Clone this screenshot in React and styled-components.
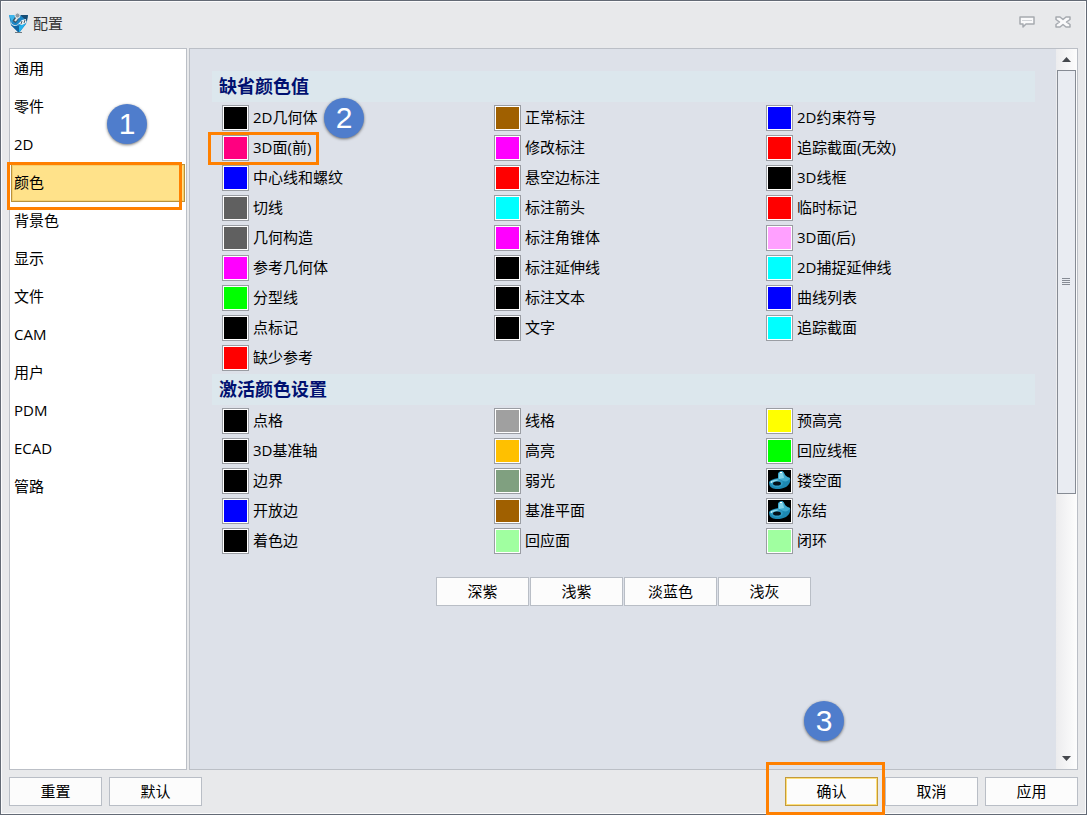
import React from "react";
import styled, { createGlobalStyle, css } from "styled-components";

const GlobalStyle = createGlobalStyle`
  *, *::before, *::after { box-sizing: border-box; }
  body {
    margin: 0;
    color: #000;
    font-family: "Open Sans", "Noto Sans CJK SC", sans-serif;
    font-size: 15px;
    line-height: 20px;
  }
  button { font: inherit; color: inherit; }
`;

const Window = styled.div`
  display: flex;
  flex-direction: column;
  min-height: 100vh;
  padding: 0 7px 7px;
  border: 1px solid #636a75;
  background: #e8e9eb;
  box-shadow: inset 0 0 0 1px #fbfbfc;
`;

const TitleBar = styled.header`
  display: flex;
  align-items: center;
  height: 47px;
  padding: 0 8px 4px 1px;
`;

const Title = styled.h1`
  flex: 1;
  margin: 0 0 0 5px;
  color: #333;
  font-size: 15px;
  font-weight: 400;
`;

const TitleButton = styled.button`
  display: flex;
  margin-left: 20px;
  padding: 0 0 2px;
  border: 0;
  background: none;
`;

const Body = styled.div`
  display: flex;
  flex: 1;
  gap: 2px;
  padding: 0 1px;
`;

const Sidebar = styled.nav`
  flex: none;
  width: 178px;
  padding: 1px;
  border: 1px solid #bbbfc6;
  background: #fff;
`;

const NavItem = styled.button`
  position: relative;
  display: block;
  width: 174px;
  height: 38px;
  padding: 0 2px 2px;
  border: 1px solid transparent;
  background: none;
  text-align: left;
  ${(p) => p.$selected && css`
    border-color: #b8923c;
    background: #ffe28a;
    box-shadow: inset 0 0 0 1px #f5d070;
  `}
`;

const Panel = styled.main`
  display: flex;
  flex: 1;
  border: 1px solid #bbbfc6;
  background: #dde1e9;
`;

const Content = styled.div`
  display: flex;
  flex: 1;
  flex-direction: column;
  gap: 1px;
  padding: 22px 21px 0 22px;
`;

const SectionTitle = styled.h2`
  height: 31px;
  margin: 0;
  padding: 0 7px;
  background: #dce7ed;
  color: #001070;
  font-size: 18px;
  font-weight: 700;
  line-height: 30px;
`;

const ColorGrid = styled.div`
  display: grid;
  grid-template-columns: repeat(3, 1fr);
  align-items: start;
  margin-right: -3px;
  padding-left: 10px;
`;

const ColorRow = styled.div`
  display: flex;
  align-items: center;
  height: 30px;
`;

const ColorLabel = styled.label`
  position: relative;
  display: flex;
  align-items: center;
  gap: 4px;
`;

const LabelText = styled.span`
  padding-bottom: 2px;
`;

const Swatch = styled.button`
  display: block;
  width: 27px;
  height: 26px;
  padding: 1px;
  border: 1px solid #9a9da3;
  background: #fff;
`;

const Fill = styled.span`
  display: block;
  height: 100%;
  background: ${(p) => p.$color};
  svg { display: block; width: 100%; height: 100%; }
`;

const Presets = styled.div`
  display: flex;
  justify-content: center;
  gap: 1px;
  padding-top: 20px;
`;

const PushButton = styled.button`
  position: relative;
  width: 93px;
  height: 29px;
  padding: 0 0 1px;
  border: 1px solid ${(p) => (p.$primary ? "#c39b3c" : "#b9bec6")};
  background: #fcfcfc;
  ${(p) => p.$primary && css`box-shadow: inset 0 0 0 1px #ffe07a;`}
`;

const ScrollBar = styled.div`
  display: flex;
  flex: none;
  flex-direction: column;
  align-items: center;
  width: 21px;
  padding-right: 1px;
  background: linear-gradient(90deg, #ececee, #fdfdfd);
`;

const ScrollArrow = styled.button`
  display: flex;
  align-items: center;
  justify-content: center;
  width: 19px;
  height: 21px;
  padding: 0;
  border: 0;
  background: none;
`;

const ScrollTrack = styled.div`
  flex: 1;
  width: 19px;
`;

const ScrollThumb = styled.div`
  display: flex;
  flex-direction: column;
  align-items: center;
  justify-content: center;
  gap: 1px;
  height: 62.5%;
  border: 1px solid #868b94;
  background: #e9ecf2;
`;

const Grip = styled.i`
  width: 8px;
  height: 1px;
  background: #868b94;
`;

const Footer = styled.footer`
  display: flex;
  gap: 7px;
  padding: 7px 1px 1px;
`;

const Spacer = styled.div`
  flex: 1;
`;

const Frame = styled.span`
  position: absolute;
  inset: ${(p) => p.$inset};
  border: 3px solid #ff8000;
  pointer-events: none;
`;

const Step = styled.span`
  position: absolute;
  top: ${(p) => p.$top}px;
  left: ${(p) => p.$left}px;
  z-index: 1;
  width: 40px;
  height: 40px;
  border-radius: 50%;
  background: #4f7dcc;
  box-shadow: 0 1px 3px #0008;
  color: #fff;
  font-family: "Liberation Sans", sans-serif;
  font-size: 30px;
  line-height: 40px;
  text-align: center;
  pointer-events: none;
`;

const AppLogo = () => (
  <svg width="19" height="22" viewBox="0 0 19 22" aria-hidden="true">
    <path d="M0 3h19l-2 9-7 9-8-8z" fill="#1b86c6" />
    <path d="M0 3h7l-4 7z" fill="#3db5ea" />
    <path d="M11 3h8l-1 6z" fill="#174c74" />
    <path d="M2 13l8 1v7z" fill="#11649f" />
    <path d="M10 14l7-3-7 10z" fill="#22b2ee" />
    <path d="M8 6l-3 4" stroke="#3c5868" strokeWidth="4" />
    <path d="M9 5L6 9" stroke="#e3e8eb" strokeWidth="2" />
    <path d="M2 9c0 4 5 6 8 2l3-3 4-1v4l-4 2-3-1c-4 4-9 1-8-3z" fill="#eaeef0" />
    <path d="M12 12l1-3M15 11l1-3" stroke="#46606f" />
    <circle cx="8.500" cy="3.500" r="2.500" fill="#8f9ca5" stroke="#e3e8eb" />
    <path d="M6 20.500h7" stroke="#6e7a82" />
  </svg>
);

const CommentIcon = () => (
  <svg width="16" height="14" viewBox="0 0 16 14" aria-hidden="true">
    <path d="M1 2h14v7H7l-3 3V9H1z" fill="#fafafb" stroke="#a6aab0" strokeWidth="1.500" strokeLinejoin="round" />
    <path d="M3 5.500h10" stroke="#d0d3d7" />
  </svg>
);

const CloseIcon = () => (
  <svg width="16" height="14" viewBox="0 0 16 14" aria-hidden="true">
    <path d="M1 2h4l3 2.500L11 2h4v2.500L11.500 7 15 9.500V12h-4L8 9.500 5 12H1V9.500L4.500 7 1 4.500z" fill="#fafafb" stroke="#a6aab0" strokeWidth="1.500" strokeLinejoin="round" />
  </svg>
);

const PartIcon = () => (
  <svg viewBox="0 0 23 22" aria-hidden="true">
    <path d="M1 12c1-2 4-3 9-4V4c0-3 5-4 6-1 1 3 3 4 6 5 1 4-1 7-4 9-4 2-10 3-14 1-2-1-3-3-3-6z" fill="#1d88b2" />
    <path d="M10 4c1-3 5-4 6-1 1 3 3 4 6 5-1 3-4 4-7 3-2-1-3-2-5-2z" fill="#3fa9cf" />
    <path d="M11 4c1-2 3-2 4-1l1 5-5 1z" fill="#7fd0e6" />
    <path d="M2 12c2-2 8-4 12-1 2 2 0 5-3 6-4 1-9-2-9-5z" fill="#2f9bc4" />
    <path d="M2 12c2-2 6-3 9-2l-8 3z" fill="#8bd6ea" />
    <ellipse cx="9" cy="13.500" rx="4" ry="2" fill="#031018" />
    <path d="M12 2.500h2M3 12h1" stroke="#fff" />
  </svg>
);

const Arrow = ({ down }) => (
  <svg width="9" height="5" viewBox="0 0 9 5" aria-hidden="true">
    <path d={down ? "M0 0h9L4.500 5z" : "M0 5h9L4.500 0z"} fill="#45484d" />
  </svg>
);

const NAV = ["通用", "零件", "2D", "颜色", "背景色", "显示", "文件", "CAM", "用户", "PDM", "ECAD", "管路"];

const SECTIONS = [
  {
    title: "缺省颜色值",
    columns: [
      [["2D几何体", "#000"], ["3D面(前)", "#ff0080"], ["中心线和螺纹", "#00f"], ["切线", "#606060"], ["几何构造", "#606060"], ["参考几何体", "#f0f"], ["分型线", "#0f0"], ["点标记", "#000"], ["缺少参考", "#f00"]],
      [["正常标注", "#a06000"], ["修改标注", "#f0f"], ["悬空边标注", "#f00"], ["标注箭头", "#0ff"], ["标注角锥体", "#f0f"], ["标注延伸线", "#000"], ["标注文本", "#000"], ["文字", "#000"]],
      [["2D约束符号", "#00f"], ["追踪截面(无效)", "#f00"], ["3D线框", "#000"], ["临时标记", "#f00"], ["3D面(后)", "#ffa0ff"], ["2D捕捉延伸线", "#0ff"], ["曲线列表", "#00f"], ["追踪截面", "#0ff"]],
    ],
  },
  {
    title: "激活颜色设置",
    columns: [
      [["点格", "#000"], ["3D基准轴", "#000"], ["边界", "#000"], ["开放边", "#00f"], ["着色边", "#000"]],
      [["线格", "#a0a0a0"], ["高亮", "#ffc000"], ["弱光", "#80a080"], ["基准平面", "#a06000"], ["回应面", "#a0ffa0"]],
      [["预高亮", "#ff0"], ["回应线框", "#0f0"], ["镂空面", "part"], ["冻结", "part"], ["闭环", "#a0ffa0"]],
    ],
  },
];

function ColorItem({ name, color }) {
  const id = `color-${name}`;
  return (
    <ColorRow>
      <ColorLabel htmlFor={id}>
        <Swatch id={id} type="button">
          <Fill $color={color === "part" ? "#000" : color}>{color === "part" && <PartIcon />}</Fill>
        </Swatch>
        <LabelText>{name}</LabelText>
        {name === "2D几何体" && <Step $top={-7} $left={102}>2</Step>}
        {name === "3D面(前)" && <Frame $inset="-3px -8px -4px -14px" />}
      </ColorLabel>
    </ColorRow>
  );
}

export default function App() {
  return (
    <>
      <GlobalStyle />
      <Window>
        <TitleBar>
          <AppLogo />
          <Title>配置</Title>
          <TitleButton type="button" aria-label="反馈"><CommentIcon /></TitleButton>
          <TitleButton type="button" aria-label="关闭"><CloseIcon /></TitleButton>
        </TitleBar>
        <Body>
          <Sidebar>
            {NAV.map((name) => (
              <NavItem key={name} type="button" $selected={name === "颜色"}>
                {name}
                {name === "颜色" && (
                  <>
                    <Frame $inset="-3px 2px -9px -5px" />
                    <Step $top={-61} $left={95}>1</Step>
                  </>
                )}
              </NavItem>
            ))}
          </Sidebar>
          <Panel>
            <Content>
              {SECTIONS.map(({ title, columns }) => (
                <React.Fragment key={title}>
                  <SectionTitle>{title}</SectionTitle>
                  <ColorGrid>
                    {columns.map((items, i) => (
                      <div key={i}>
                        {items.map(([name, color]) => <ColorItem key={name} name={name} color={color} />)}
                      </div>
                    ))}
                  </ColorGrid>
                </React.Fragment>
              ))}
              <Presets>
                {["深紫", "浅紫", "淡蓝色", "浅灰"].map((name) => <PushButton key={name} type="button">{name}</PushButton>)}
              </Presets>
            </Content>
            <ScrollBar>
              <ScrollArrow type="button" aria-label="向上"><Arrow /></ScrollArrow>
              <ScrollTrack>
                <ScrollThumb><Grip /><Grip /><Grip /><Grip /></ScrollThumb>
              </ScrollTrack>
              <ScrollArrow type="button" aria-label="向下"><Arrow down /></ScrollArrow>
            </ScrollBar>
          </Panel>
        </Body>
        <Footer>
          <PushButton type="button">重置</PushButton>
          <PushButton type="button">默认</PushButton>
          <Spacer />
          <PushButton type="button" $primary>
            确认
            <Frame $inset="-16px -8px -10px -20px" />
            <Step $top={-77} $left={18}>3</Step>
          </PushButton>
          <PushButton type="button">取消</PushButton>
          <PushButton type="button">应用</PushButton>
        </Footer>
      </Window>
    </>
  );
}
